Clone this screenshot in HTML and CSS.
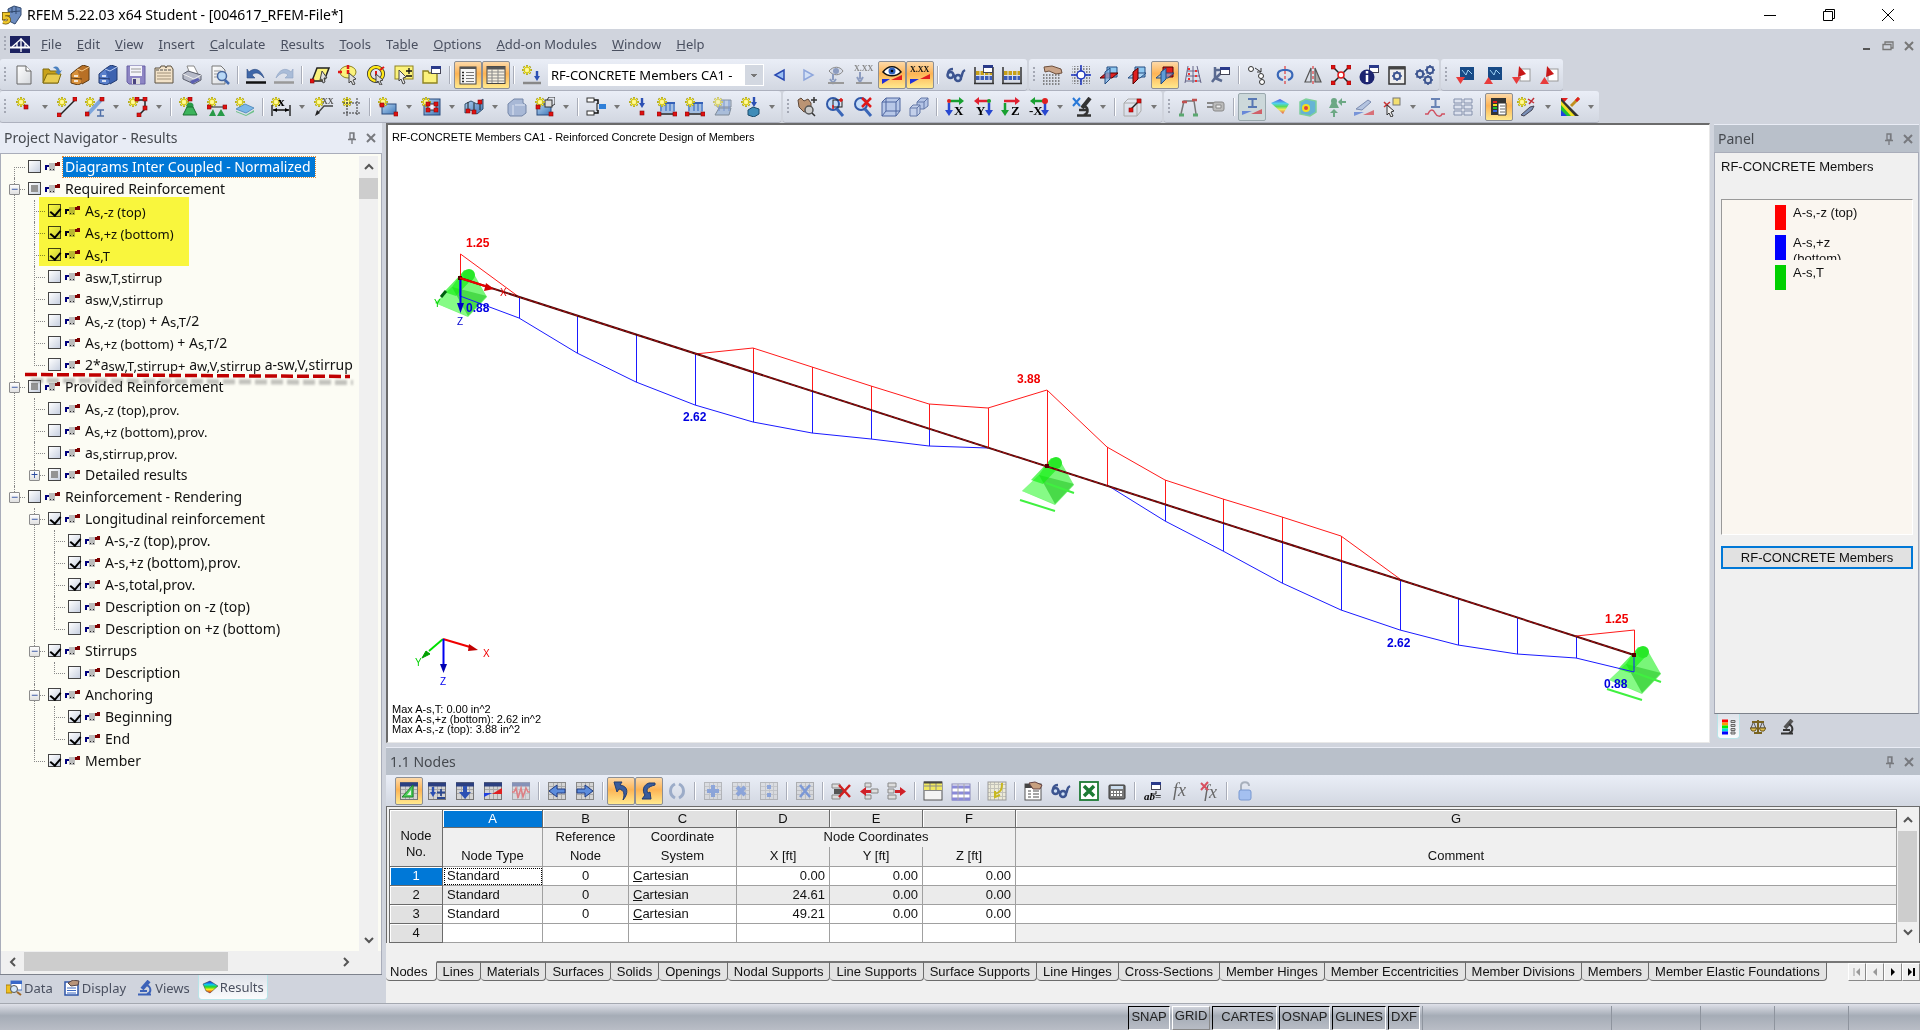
FILE: index.html
```html
<!DOCTYPE html>
<html lang="en">
<head>
    <meta charset="UTF-8">
    <meta name="viewport" content="width=device-width, initial-scale=1.0">
    <link rel="stylesheet" href="styles.css">
    <title>RFEM 5.22.03 x64 Student</title>
</head>
<body>
    <!-- Shared paints -->
    <svg class="paints" aria-hidden="true">
        <defs>
            <linearGradient id="gBlue" x1="0" y1="0" x2="1" y2="1"><stop offset="0" stop-color="#b5d4f2"/><stop offset="1" stop-color="#3f78b8"/></linearGradient>
            <linearGradient id="gRain" x1="0" y1="0" x2="0" y2="1"><stop offset="0" stop-color="#1418e0"/><stop offset=".3" stop-color="#12c8e8"/><stop offset=".5" stop-color="#22d822"/><stop offset=".7" stop-color="#f8ee18"/><stop offset="1" stop-color="#e81818"/></linearGradient>
            <linearGradient id="gPage" x1="0" y1="0" x2="1" y2="1"><stop offset="0" stop-color="#ffffff"/><stop offset="1" stop-color="#d5d8dc"/></linearGradient>
            <pattern id="pGrid" width="4" height="4" patternUnits="userSpaceOnUse"><path d="M0 3.5h4M3.5 0v4" stroke="#9a9a9a" stroke-width="1"/></pattern>
            <pattern id="pDots" width="3" height="3" patternUnits="userSpaceOnUse"><path d="M0 1h1.5" stroke="#666" stroke-width="1.5"/></pattern>
        </defs>
    </svg>

    <!-- Icon sprite -->
    <svg class="sprite" aria-hidden="true">
        <defs>
            <g id="star"><path d="M5 0v10M0 5h10M1.5 1.5l7 7M8.5 1.5l-7 7" stroke="#9b9420" stroke-width="2"/><path d="M5 .5v9M.5 5h9M2 2l6 6M8 2l-6 6" stroke="#fff12e" stroke-width="1.2"/><circle cx="5" cy="5" r="2" fill="#fff9a0"/></g>
            <g id="node"><rect width="4" height="4" fill="#e01010" stroke="#8a0808" stroke-width=".6"/></g>
            <g id="down"><path d="M3 0v6" stroke="#2c50b4" stroke-width="2.4"/><path d="M0 5h6l-3 5z" fill="#2c50b4"/></g>
            <g id="win"><rect x=".5" y=".5" width="9" height="7" fill="#fff" stroke="#445"/><path d="M0 1.5h10" stroke="#2a3a8a" stroke-width="3"/></g>
            <g id="sheet"><rect x="1.500" y="1.500" width="17" height="17" fill="#d4d4d4" stroke="#777"/><path d="M2 8.500h16M2 12.500h16M6.500 5v13M10.500 5v13M14.500 5v13" stroke="#a8a8a8"/><path d="M1 3.500h18" stroke="#2b3f80" stroke-width="4"/></g>
            <g id="sheet-plain"><rect x="1.500" y="1.500" width="17" height="17" fill="#d4d4d4" stroke="#888"/><path d="M2 5.500h16M2 9.500h16M2 13.500h16M6.500 2v16M10.500 2v16M14.500 2v16" stroke="#a8a8a8"/></g>
            <g id="mirror"><path d="M8 3L2 17h6z" fill="none" stroke="#555" stroke-width="1.200"/><path d="M12 3l6 14h-6z" fill="#aaa" stroke="#555" stroke-width="1.200"/><path d="M10 1v18" stroke="#e01818" stroke-dasharray="3 2"/></g>
            <g id="gear"><circle cx="5" cy="5" r="3.200" fill="none" stroke="#3d5590" stroke-width="2"/><path d="M5 0v2M5 8v2M0 5h2M8 5h2M1.500 1.500l1.500 1.500M7 7l1.500 1.500M8.500 1.500l-1.500 1.500M3 7l-1.500 1.500" stroke="#3d5590" stroke-width="1.600"/></g>
        </defs>
        <symbol id="new" viewBox="0 0 20 20"><path d="M3 1h9l5 5v13H3z" fill="url(#gPage)" stroke="#666"/><path d="M12 1v5h5" fill="#fff" stroke="#666"/></symbol>
        <symbol id="open" viewBox="0 0 20 20"><path d="M1 7V4h6l1 2h8v12H1z" fill="#c9a21a" stroke="#7e6a10"/><path d="M1 18l4-9h14l-3 9z" fill="#e8cc50" stroke="#7e6a10"/><path d="M11 3c3-3 6-1 7 3l2-1-3 5-4-3 2-1c-1-2-2-3-4-3z" fill="#4a80c0"/></symbol>
        <symbol id="cabinet" viewBox="0 0 20 20"><path d="M1 9l6-5 5 2v12l-4 2-7-2z" fill="#d9913a" stroke="#5e3a12"/><path d="M7 4l6-4 6 2v13l-7 4" fill="#b87026" stroke="#5e3a12"/><path d="M7 4l5 2 7-4" fill="none" stroke="#f6cc8c"/><path d="M1 13l11 1" stroke="#5e3a12"/><path d="M4 11h4M4 16h4" stroke="#fff" stroke-width="1.500"/></symbol>
        <symbol id="cabinet-blue" viewBox="0 0 20 20"><path d="M1 9l6-5 5 2v12l-4 2-7-2z" fill="#5a80cc" stroke="#20386e"/><path d="M7 4l6-4 6 2v13l-7 4" fill="#3c62b0" stroke="#20386e"/><path d="M7 4l5 2 7-4" fill="none" stroke="#bcd0f4"/><path d="M1 13l11 1" stroke="#20386e"/><path d="M4 11h4M4 16h4" stroke="#fff" stroke-width="1.500"/></symbol>
        <symbol id="save" viewBox="0 0 20 20"><path d="M1 1h18v18H3l-2-2z" fill="#8d85c4" stroke="#6860a4"/><rect x="4" y="1" width="12" height="10" fill="#f4f4fa"/><path d="M5 4h10M5 7h10" stroke="#999"/><rect x="6" y="13" width="8" height="6" fill="#ddd"/><rect x="7" y="14" width="3" height="5" fill="#4a4480"/></symbol>
        <symbol id="cards" viewBox="0 0 20 20"><path d="M1 3h5l1-2h4l1 2 1-2h4l2 3v14H1z" fill="#f2e2c8" stroke="#5b5040"/><path d="M3 8h14M3 11h14M3 14h14" stroke="#a09078"/><path d="M2 5h16" stroke="#555" stroke-dasharray="3 1"/></symbol>
        <symbol id="print" viewBox="0 0 20 20"><path d="M5 1h7l4 8H8z" fill="#fff" stroke="#888"/><path d="M1 9l5-3 13 4v5l-7 4L1 14z" fill="#b6bac8" stroke="#5a5e6c"/><path d="M1 9l11 5 7-4" fill="none" stroke="#eee"/><path d="M8 16l8-3 2 2-8 4z" fill="#5b5fb0"/></symbol>
        <symbol id="preview" viewBox="0 0 20 20"><path d="M2 1h9l4 4v14H2z" fill="url(#gPage)" stroke="#777"/><path d="M4 6h7M4 9h6M4 12h5" stroke="#999"/><circle cx="12" cy="11" r="4.500" fill="#b8d8f6" stroke="#44649c" stroke-width="1.500"/><path d="M15 15l4 4" stroke="#3f68b0" stroke-width="2.500"/></symbol>
        <symbol id="undo" viewBox="0 0 20 20"><path d="M1 4l2 3c5-5 12-3 15 6-5-6-9-6-12-3l3 3H1z" fill="#3d66a8" stroke="#2b4a80" stroke-width=".6"/><path d="M0 17.500h20" stroke="#111" stroke-width="2.500"/></symbol>
        <symbol id="redo" viewBox="0 0 20 20"><path d="M19 4l-2 3C12 2 5 4 2 13c5-6 9-6 12-3l-3 3h8z" fill="#a9bcd8" stroke="#8fa3c2" stroke-width=".6"/><path d="M0 17.500h20" stroke="#999" stroke-width="2.500"/></symbol>
        <symbol id="sel-para" viewBox="0 0 20 20"><path d="M7 3h12l-5 13H2z" fill="#fbf27c" stroke="#222" stroke-width="1.500"/><use href="#node" x="0" y="14"/><path d="M12 6l5 7-3 0 1 4-2 1-1-4-2 1z" fill="#ddd" stroke="#444"/></symbol>
        <symbol id="sel-ellipse" viewBox="0 0 20 20"><ellipse cx="10" cy="7" rx="8" ry="6" fill="#fbf27c" stroke="#8f8420"/><path d="M0 7h4M10 0v4M10 5v4" stroke="#e01818" stroke-width="2.500"/><path d="M11 8l7 6-3 1 2 4-2 1-2-4-2 2z" fill="#ddd" stroke="#444"/></symbol>
        <symbol id="sel-ring" viewBox="0 0 20 20"><circle cx="10" cy="9" r="7" fill="none" stroke="#222" stroke-width="4"/><circle cx="10" cy="9" r="7" fill="none" stroke="#ffe818" stroke-width="2.500"/><path d="M10 6v5M14 5l4-3" stroke="#e01818" stroke-width="2"/><path d="M10 9l7 6-3 1 2 4-2 0-2-4-2 2z" fill="#ddd" stroke="#444"/></symbol>
        <symbol id="sel-plus" viewBox="0 0 20 20"><rect x="1" y="1" width="18" height="13" fill="#fbf27c" stroke="#8f8420"/><path d="M15 3v6M12 6h6M12 11h6" stroke="#111" stroke-width="1.300"/><path d="M5 5l7 7-3 1 2 5-2 1-2-5-2 2z" fill="#eee" stroke="#444"/></symbol>
        <symbol id="sel-win" viewBox="0 0 20 20"><path d="M1 6h5l1 2h8v10H1z" fill="#fbf27c" stroke="#8f8420" stroke-width="1.400"/><use href="#win" x="9" y="1"/></symbol>
        <symbol id="list" viewBox="0 0 20 20"><rect x="2" y="2" width="16" height="17" fill="#f6f6f6" stroke="#444"/><path d="M2 3h16" stroke="#555" stroke-width="2"/><path d="M8 7.500h8M8 10.500h8M8 13.500h8M8 16.500h8" stroke="#777"/><path d="M4 7.500h2M4 10.500h2M4 13.500h2M4 16.500h2" stroke="#222" stroke-width="1.500"/></symbol>
        <symbol id="tableicon" viewBox="0 0 20 20"><rect x="1" y="1.500" width="18" height="17" fill="#f6f0e0" stroke="#444"/><path d="M1 3h18" stroke="#555" stroke-width="3"/><path d="M1 7h18M1 10h18M1 13h18M1 16h18M6 4v14M12 4v14" stroke="#888"/></symbol>
        <symbol id="load" viewBox="0 0 20 20"><use href="#star"/><use href="#down" x="12" y="6"/><path d="M1 18h18" stroke="#888" stroke-width="2.500"/></symbol>
        <symbol id="prev" viewBox="0 0 20 20"><path d="M14 5v10l-9-5z" fill="#9cc0f4" stroke="#2848b0" stroke-width="1.500"/></symbol>
        <symbol id="next" viewBox="0 0 20 20"><path d="M6 5v10l9-5z" fill="#d2e0f6" stroke="#8ea6dc" stroke-width="1.500"/></symbol>
        <symbol id="eye-load" viewBox="0 0 20 20"><path d="M3 6c4-5 11-5 14 0-3 5-10 5-14 0z" fill="#d8dde8" stroke="#888"/><circle cx="10" cy="6" r="3" fill="#8c9cc0"/><path d="M7 9v6M4 14l3 4 3-4" stroke="#8c9cc0" stroke-width="2" fill="none"/><path d="M2 18h16" stroke="#999" stroke-width="2"/></symbol>
        <symbol id="x-load" viewBox="0 0 20 20"><text x="0" y="6" class="glyph-x" fill="#888">X.XX</text><path d="M6 7v7M3 12l3 5 3-5" stroke="#8c9cc0" stroke-width="2" fill="none"/><path d="M2 18h16" stroke="#999" stroke-width="2"/></symbol>
        <symbol id="eye" viewBox="0 0 20 20"><path d="M1 7c5-7 13-7 18 0-5 5-13 5-18 0z" fill="#fff" stroke="#111" stroke-width="1.500"/><circle cx="10" cy="6" r="3.500" fill="#2f63c0"/><circle cx="10" cy="6" r="1.300" fill="#000"/><path d="M0 19v-5l8 0z" fill="#2030d8"/><path d="M20 10v5H9z" fill="#e02020"/></symbol>
        <symbol id="xxx" viewBox="0 0 20 20"><text x="0" y="7" class="glyph-x" fill="#111">X.XX</text><path d="M0 19v-5l9 0z" fill="#2030d8"/><path d="M20 9v5H10z" fill="#e02020"/></symbol>
        <symbol id="glasses" viewBox="0 0 20 20"><circle cx="4.500" cy="10" r="3" fill="#cfe0f4" stroke="#3d5590" stroke-width="2.500"/><circle cx="12" cy="13" r="3" fill="#cfe0f4" stroke="#3d5590" stroke-width="2.500"/><path d="M2 8c1-4 3-4 5-4M15 12c2-2 0-5 4-7M7 10l3 2" fill="none" stroke="#3d5590" stroke-width="2.500"/></symbol>
        <symbol id="abacus" viewBox="0 0 20 20"><path d="M1 2v17M19 2v17M0 18.500h20" stroke="#333" stroke-width="1.500"/><path d="M2 8h16" stroke="#c8a018" stroke-width="4" stroke-dasharray="3.500 1"/><path d="M2 13h16" stroke="#3c5cb8" stroke-width="4" stroke-dasharray="3.500 1"/></symbol>
        <symbol id="abacus-win" viewBox="0 0 20 20"><path d="M1 2v17M19 2v17M0 18.500h20" stroke="#333" stroke-width="1.500"/><path d="M2 8h16" stroke="#c8a018" stroke-width="4" stroke-dasharray="3.500 1"/><path d="M2 13h16" stroke="#3c5cb8" stroke-width="4" stroke-dasharray="3.500 1"/><use href="#win" x="9" y="0"/></symbol>
        <symbol id="hand-grid" viewBox="0 0 20 20"><rect y="8" width="18" height="12" fill="url(#pDots)"/><path d="M1 2l8-1 9 3 1 4-6 1-7-3-4 1z" fill="#caa58a" stroke="#6d4f3c"/></symbol>
        <symbol id="grid-center" viewBox="0 0 20 20"><rect x="1" y="1" width="18" height="18" fill="url(#pDots)"/><path d="M10 0v20M0 10h20" stroke="#1b35c0" stroke-width="1.500"/><circle cx="10" cy="10" r="4" fill="#fff" stroke="#1b35c0" stroke-width="1.500"/></symbol>
        <symbol id="plane-xy" viewBox="0 0 20 20"><path d="M8 2h10v10H8z" fill="#8fc8f0" stroke="#234a80"/><path d="M1 13l6-5h12l-6 5z" fill="#e02020" stroke="#500"/><path d="M6 7l5-4v11l-5 5z" fill="#7ab4e8" fill-opacity=".75" stroke="#234a80"/></symbol>
        <symbol id="plane-yz" viewBox="0 0 20 20"><path d="M8 2h10v10H8z" fill="#8fc8f0" stroke="#234a80"/><path d="M1 13l6-5h12l-6 5z" fill="#a8d4f4" stroke="#234a80"/><path d="M6 7l5-4v11l-5 5z" fill="#e02020" stroke="#500"/></symbol>
        <symbol id="plane-xz" viewBox="0 0 20 20"><path d="M8 2h10v10H8z" fill="#e02020" stroke="#500"/><path d="M1 13l6-5h12l-6 5z" fill="#8fc0ec" fill-opacity=".6" stroke="#234a80"/><path d="M6 7l5-4v11l-5 5z" fill="#5c9cd8" stroke="#234a80"/></symbol>
        <symbol id="net" viewBox="0 0 20 20"><path d="M5 1L2 18M10 1v17M14 1l4 17M4 6h12M3 11h14M2 16h16" stroke="#668" fill="none"/><path d="M6 3v13M13 5v12" stroke="#f03030" stroke-width="2" stroke-dasharray="2 3"/></symbol>
        <symbol id="wrench" viewBox="0 0 20 20"><path d="M4 2v11l-3 4M4 5h6M4 13l7 3M5 13l8-8" stroke="#5a6a90" stroke-width="2.500" fill="none"/><use href="#win" x="9" y="2"/></symbol>
        <symbol id="copy-node" viewBox="0 0 20 20"><circle cx="4" cy="4" r="2.500" fill="#fff" stroke="#333"/><circle cx="14" cy="11" r="2.500" fill="#fff" stroke="#333"/><circle cx="15" cy="17" r="2.500" fill="#fff" stroke="#333"/><path d="M8 3l6 4M14 3v4h-4" stroke="#333" fill="none"/></symbol>
        <symbol id="rotate" viewBox="0 0 20 20"><path d="M8 15C1 13 1 6 8 5h4c7 1 7 8 1 10" fill="none" stroke="#3a68b8" stroke-width="2.200"/><path d="M10 1v18" stroke="#e01818" stroke-dasharray="3 2"/></symbol>
        <symbol id="mirror-i" viewBox="0 0 20 20"><use href="#mirror"/></symbol>
        <symbol id="explode" viewBox="0 0 20 20"><path d="M2 2l16 16M18 2L2 18" stroke="#222" stroke-width="1.500"/><use href="#node"/><use href="#node" x="16"/><use href="#node" y="16"/><use href="#node" x="16" y="16"/><circle cx="10" cy="10" r="3" fill="#fff" stroke="#e01818" stroke-width="1.500"/></symbol>
        <symbol id="info" viewBox="0 0 20 20"><use href="#win" x="10" y="0"/><circle cx="8" cy="12" r="7.500" fill="#1c2470"/><path d="M8 10v7M8 6v2.500" stroke="#fff" stroke-width="2.500"/></symbol>
        <symbol id="gear-win" viewBox="0 0 20 20"><rect x="2" y="2" width="16" height="17" fill="#eee" stroke="#333" stroke-width="1.500"/><path d="M2 3h16" stroke="#444" stroke-width="3"/><use href="#gear" x="5" y="6"/></symbol>
        <symbol id="gears" viewBox="0 0 20 20"><use href="#gear" x="0" y="4"/><use href="#gear" x="10" y="0"/><use href="#gear" x="8" y="10"/></symbol>
        <symbol id="mod-down" viewBox="0 0 20 20"><rect x="5" y="2" width="14" height="13" fill="#174a86"/><path d="M7 5l4 5 2-5 4 4" stroke="#9cd0f4" fill="none"/><path d="M1 12h9l-4.500 7z" fill="#e83c3c"/></symbol>
        <symbol id="mod-up" viewBox="0 0 20 20"><rect x="5" y="2" width="14" height="13" fill="#174a86"/><path d="M7 5l4 5 2-5 4 4" stroke="#9cd0f4" fill="none"/><path d="M1 19h9l-4.500-7z" fill="#e83c3c"/></symbol>
        <symbol id="pdf-down" viewBox="0 0 20 20"><rect x="9" y="4" width="10" height="12" fill="#fff" stroke="#999"/><path d="M8 1l7 8-8 3z" fill="#c81818"/><path d="M1 12h9l-4.500 7z" fill="#e83c3c"/></symbol>
        <symbol id="pdf-up" viewBox="0 0 20 20"><rect x="9" y="4" width="10" height="12" fill="#fff" stroke="#999"/><path d="M8 1l7 8-8 3z" fill="#c81818"/><path d="M1 19h9l-4.500-7z" fill="#e83c3c"/></symbol>
        <!-- second row -->
        <symbol id="n-node" viewBox="0 0 20 20"><use href="#star" x="2"/><use href="#node" x="10" y="8"/></symbol>
        <symbol id="n-line" viewBox="0 0 20 20"><use href="#star"/><path d="M3 18L18 3" stroke="#222" stroke-width="1.500"/><use href="#node" x="16"/><use href="#node" y="16"/></symbol>
        <symbol id="n-member" viewBox="0 0 20 20"><use href="#star"/><path d="M2 18L16 3" stroke="#7ea6dc" stroke-width="4"/><use href="#node" x="15"/><use href="#node" y="15"/><path d="M12 13h7M12 19h7M15.500 13v6" stroke="#5070a8" stroke-width="1.500"/></symbol>
        <symbol id="n-poly" viewBox="0 0 20 20"><use href="#star"/><path d="M8 3h9v9l-6 6" stroke="#222" fill="none" stroke-width="1.500"/><use href="#node" x="7" y="0"/><use href="#node" x="15" y="0"/><use href="#node" x="15" y="9"/><use href="#node" x="9" y="16"/></symbol>
        <symbol id="n-support" viewBox="0 0 20 20"><use href="#star"/><use href="#node" x="9" y="0"/><circle cx="11" cy="9" r="3.500" fill="#289a48"/><path d="M8 10l-4 8h14l-4-8z" fill="#3cb45c" stroke="#1a7030"/></symbol>
        <symbol id="n-linesup" viewBox="0 0 20 20"><use href="#star"/><path d="M2 10h16" stroke="#222"/><use href="#node" y="8"/><use href="#node" x="16" y="8"/><path d="M6 12l-4 7h7zM14 12l-4 7h8z" fill="#289a48"/></symbol>
        <symbol id="n-surfsup" viewBox="0 0 20 20"><use href="#star"/><path d="M1 12l9-5 9 4-8 5z" fill="#7cb8e8" stroke="#5890c0"/><path d="M1 14l10 4 8-5v2l-8 4-10-4z" fill="#6cc088"/></symbol>
        <symbol id="dim" viewBox="0 0 20 20"><use href="#star"/><text x="7" y="9" class="glyph-l">x</text><path d="M1 8v11M19 8v11M2 13h16" stroke="#111" stroke-width="1.300"/><path d="M2 13l4-2v4zM18 13l-4-2v4z"/></symbol>
        <symbol id="dimxx" viewBox="0 0 20 20"><use href="#star"/><text x="8" y="7" class="glyph-x" fill="#555">XX</text><path d="M19 9h-9L3 17" stroke="#444" fill="none" stroke-width="1.300"/><path d="M1 19l2-6 3 3z" fill="#222"/></symbol>
        <symbol id="guide" viewBox="0 0 20 20"><use href="#star"/><path d="M5 2v18M15 1v18M1 6h18M1 16h18" stroke="#333" stroke-dasharray="2 1"/></symbol>
        <symbol id="n-surf" viewBox="0 0 20 20"><rect x="4" y="7" width="14" height="10" fill="url(#gBlue)" stroke="#2b4a7c"/><use href="#star"/><use href="#node" x="2" y="6"/><use href="#node" x="16" y="15"/></symbol>
        <symbol id="n-opening" viewBox="0 0 20 20"><rect x="3" y="2" width="16" height="16" fill="url(#gBlue)" stroke="#2b4a7c"/><rect x="7" y="7" width="8" height="6" fill="#eef" stroke="#333"/><use href="#star"/><use href="#node" x="5" y="5"/><use href="#node" x="13" y="5"/><use href="#node" x="5" y="11"/><use href="#node" x="13" y="11"/></symbol>
        <symbol id="n-solid" viewBox="0 0 20 20"><path d="M1 7l6-3 6 3 6-5v10l-6 5-6-4-6 3z" fill="url(#gBlue)" stroke="#33506c"/><path d="M4 5v9M10 6v9M16 4v9" stroke="#222"/><use href="#node" x="2" y="12"/><use href="#node" x="8" y="13"/><use href="#node" x="14" y="3"/></symbol>
        <symbol id="solid" viewBox="0 0 20 20"><path d="M1 7l6-5h9v4l3 2v8l-4 3H3l-2-3z" fill="#a8b8d6" stroke="#7486a8"/><path d="M8 8h10M6 8v10" stroke="#dfe6f4"/></symbol>
        <symbol id="n-block" viewBox="0 0 20 20"><rect x="2" y="7" width="14" height="11" fill="url(#gBlue)" stroke="#2b4a7c"/><rect x="10" y="3" width="7" height="7" fill="#ddd" stroke="#333"/><path d="M12 3l2-3h6v7l-3 2" fill="none" stroke="#333"/><use href="#star"/><use href="#node" x="1" y="8"/><use href="#node" x="14" y="15"/></symbol>
        <symbol id="connect" viewBox="0 0 20 20"><rect x="1" y="1" width="7" height="4" fill="#fff" stroke="#333"/><rect x="1" y="14" width="7" height="4" fill="#fff" stroke="#333"/><path d="M8 3h4v4M8 16h4v-3" fill="none" stroke="#111" stroke-width="1.500"/><rect x="13" y="7" width="7" height="5" fill="#2f7fd8"/><path d="M11 6v8" stroke="#111"/></symbol>
        <symbol id="n-load" viewBox="0 0 20 20"><use href="#star"/><use href="#down" x="10" y="1"/><use href="#node" x="11" y="14"/></symbol>
        <symbol id="n-loads" viewBox="0 0 20 20"><path d="M3 6h15M4 6v8M9 6v8M13 6v8M17 6v8" stroke="#3460b8" stroke-width="1.800"/><path d="M1 17h18" stroke="#222" stroke-width="1.500"/><path d="M3 7h15v9H3z" fill="#7ea8dc" fill-opacity=".6"/><use href="#star"/><use href="#node" y="15"/><use href="#node" x="16" y="15"/></symbol>
        <symbol id="n-surfload" viewBox="0 0 20 20"><g opacity=".6"><path d="M4 3h14v7H4z" fill="#a8c0e0" stroke="#456"/><path d="M2 18l4-7h12l-2 7z" fill="#8aa8d0" stroke="#456"/><path d="M6 3v11M11 3v11M16 3v11" stroke="#3460b8"/><use href="#star"/></g></symbol>
        <symbol id="n-free" viewBox="0 0 20 20"><use href="#star"/><use href="#down" x="10" y="0"/><path d="M7 13l5-3 6 2v5l-5 3-6-2z" fill="#3f8cb8" stroke="#1c4c6c"/></symbol>
        <symbol id="hand-zoom" viewBox="0 0 20 20"><path d="M1 3l3-2 3 3 4-2 3 4v7l-7 2-5-5z" fill="#bb9474" stroke="#5e4838"/><circle cx="12" cy="13" r="4" fill="#ccc" stroke="#555" stroke-width="1.500"/><path d="M14 3h6M17 0v6M15 16l3 3" stroke="#333" stroke-width="1.500"/></symbol>
        <symbol id="zoom-win" viewBox="0 0 20 20"><circle cx="8" cy="7" r="6" fill="#c4dcf8" stroke="#3058a8" stroke-width="2"/><rect x="8" y="3" width="9" height="7" fill="none" stroke="#222"/><path d="M16 1v4M18 3h-4M8 8v4" stroke="#e01818" stroke-width="1.500"/><path d="M12 12l6 7" stroke="#3a66b8" stroke-width="3"/></symbol>
        <symbol id="zoom-x" viewBox="0 0 20 20"><circle cx="8" cy="7" r="6" fill="#c4dcf8" stroke="#3058a8" stroke-width="2"/><path d="M12 12l6 7" stroke="#3a66b8" stroke-width="3"/><path d="M9 1l9 9M18 1L9 10" stroke="#e01818" stroke-width="2.500"/></symbol>
        <symbol id="cube" viewBox="0 0 20 20"><path d="M1 5l4-4h14v13l-4 5H1z" fill="#b8c8e8" stroke="#4e66a0"/><path d="M1 5h14v14M15 5l4-4M5 1v13h14M5 14l-4 5" stroke="#4e66a0" fill="none"/></symbol>
        <symbol id="cubes" viewBox="0 0 20 20"><path d="M8 5l4-4h7v8l-4 3H8z" fill="#b4c4e6" stroke="#6478a8"/><path d="M8 5h7v7M15 5l4-4" fill="none" stroke="#6478a8"/><path d="M1 11l3-3h7v8l-3 3H1z" fill="#c4d0ea" stroke="#6478a8"/><path d="M1 11h7v8M8 11l3-3" fill="none" stroke="#6478a8"/></symbol>
        <symbol id="ax-x" viewBox="0 0 20 20"><path d="M3 4h13" stroke="#18a030" stroke-width="2.500"/><path d="M14 0v8l5-4z" fill="#18a030"/><path d="M4 6v9" stroke="#2848d0" stroke-width="2.500"/><path d="M0 13h8l-4 6z" fill="#2848d0"/><circle cx="4" cy="4" r="2" fill="#e02020"/><text x="9" y="18" class="glyph-l">X</text></symbol>
        <symbol id="ax-y" viewBox="0 0 20 20"><path d="M4 4h13" stroke="#e02030" stroke-width="2.500"/><path d="M6 0v8L1 4z" fill="#e02030"/><path d="M16 6v9" stroke="#2848d0" stroke-width="2.500"/><path d="M12 13h8l-4 6z" fill="#2848d0"/><circle cx="16" cy="4" r="2" fill="#18a030"/><text x="3" y="18" class="glyph-l">Y</text></symbol>
        <symbol id="ax-z" viewBox="0 0 20 20"><path d="M3 4h13" stroke="#e02030" stroke-width="2.500"/><path d="M14 0v8l5-4z" fill="#e02030"/><path d="M4 6v9" stroke="#18a030" stroke-width="2.500"/><path d="M0 13h8l-4 6z" fill="#18a030"/><text x="10" y="18" class="glyph-l">Z</text></symbol>
        <symbol id="ax-mx" viewBox="0 0 20 20"><path d="M4 4h12" stroke="#18a030" stroke-width="2.500"/><path d="M6 0v8L1 4z" fill="#18a030"/><path d="M16 6v9" stroke="#2848d0" stroke-width="2.500"/><path d="M12 13h8l-4 6z" fill="#2848d0"/><circle cx="16" cy="4" r="3" fill="#e02020"/><text x="0" y="18" class="glyph-l">-X</text></symbol>
        <symbol id="scope-x" viewBox="0 0 20 20"><path d="M1 1l7 8M8 1L1 9" stroke="#2878d8" stroke-width="2"/><path d="M18 1l-8 10" stroke="#333" stroke-width="4"/><path d="M10 9c7 0 7 7 2 9M5 18.500h14M7 13h8" stroke="#333" stroke-width="2.500" fill="none"/></symbol>
        <symbol id="clip" viewBox="0 0 20 20"><path d="M1 6l4-4h13v12l-4 5H1z" fill="none" stroke="#aaa"/><path d="M1 6h13v13" fill="none" stroke="#aaa"/><path d="M8 12l8-8" stroke="#222" stroke-width="1.500"/><use href="#node" x="14" y="2"/><use href="#node" x="6" y="11"/></symbol>
        <symbol id="frame" viewBox="0 0 20 20"><path d="M3 17L6 4h10l2 13" fill="none" stroke="#777" stroke-width="1.500"/><path d="M4 5h5M14 3h5" stroke="#c05050" stroke-width="2.500"/><path d="M1 18h5M15 18h5" stroke="#5aa870" stroke-width="3"/></symbol>
        <symbol id="motor" viewBox="0 0 20 20"><path d="M1 6h8M1 10h6" stroke="#888" stroke-width="2"/><rect x="7" y="5" width="11" height="9" rx="2" fill="#bbb" stroke="#888"/><path d="M10 8h5v3h-5z" fill="#eee" stroke="#888"/></symbol>
        <symbol id="forces" viewBox="0 0 20 20"><path d="M6 2h9M10.500 2v8M6 10h9" stroke="#5878b4" stroke-width="2"/><path d="M0 18v-4h10z" fill="#6888d8"/><path d="M20 12v5H9z" fill="#d06068"/></symbol>
        <symbol id="surfres" viewBox="0 0 20 20"><path d="M1 6l9-4 9 5-6 10z" fill="url(#gRain)" opacity=".7"/></symbol>
        <symbol id="solidres" viewBox="0 0 20 20"><path d="M2 5l6-3 10 2v11l-6 4-10-2z" fill="#48a8d0" stroke="#6c8" stroke-width="1.500" opacity=".8"/><circle cx="8" cy="11" r="4" fill="#f0e020"/><circle cx="8" cy="11" r="2" fill="#e04040"/></symbol>
        <symbol id="react" viewBox="0 0 20 20"><g fill="#6ca884"><circle cx="8" cy="4" r="3"/><path d="M3 11l3-6h4l3 6zM8 12l4 4h-3v4H7v-4H4zM12 5l4-4v3h4v2h-4v3z"/></g></symbol>
        <symbol id="memres" viewBox="0 0 20 20"><path d="M2 12L14 3l3 2L8 13z" fill="#b4c4e0" stroke="#7c8cb0"/><path d="M0 19v-4h10z" fill="#7894d8"/><path d="M20 13v5H9z" fill="#d87078"/></symbol>
        <symbol id="select-res" viewBox="0 0 20 20"><path d="M2 5l6 6M8 5l-6 5" stroke="#c83030" stroke-width="1.500"/><rect x="11" y="1" width="7" height="7" fill="#f4e070" stroke="#777"/><path d="M5 8l7 6-3 1 2 4-2 1-2-4-2 2z" fill="#eee" stroke="#333"/></symbol>
        <symbol id="ibeam" viewBox="0 0 20 20"><path d="M6 2h9M10.500 2v8M6 10h9" stroke="#6882b4" stroke-width="2"/><path d="M0 17h3c2-5 5-5 7-1s6 4 7 1h3" fill="none" stroke="#d05060" stroke-width="1.500"/></symbol>
        <symbol id="panels" viewBox="0 0 20 20"><path d="M1 2h8v4H1zM11 2h8v4h-8zM1 8h8v4H1zM11 8h8v4h-8zM1 14h8v4H1zM11 14h8v4h-8z" fill="#dde2ee" stroke="#8490ac"/></symbol>
        <symbol id="colors" viewBox="0 0 20 20"><rect x="2" y="1" width="15" height="17" fill="#333"/><path d="M4 5h4" stroke="#e02020" stroke-width="2"/><path d="M4 8h4" stroke="#f0e020" stroke-width="2"/><path d="M4 11h4" stroke="#20c030" stroke-width="2"/><path d="M4 14h4" stroke="#3060e0" stroke-width="2"/><path d="M9 6h8v12H9z" fill="#fff" stroke="#333"/><path d="M11 9h5M11 12h5M11 15h5" stroke="#666"/></symbol>
        <symbol id="wand" viewBox="0 0 20 20"><use href="#star"/><path d="M11 2l6 4M17 1l-5 6" stroke="#c03038" stroke-width="1.500"/><path d="M4 18l9-8 4-1-2 4-8 6z" fill="#7a90b8" stroke="#445"/></symbol>
        <symbol id="stripes" viewBox="0 0 20 20"><path d="M1 1h7L1 9z" fill="#e02020"/><path d="M1 1v18h18z" fill="#333"/><path d="M1 4l14 15H9L1 10z" fill="#f0e020"/><path d="M1 8l10 11H6l-5-5z" fill="#20c030"/><path d="M1 13l6 6H1z" fill="#2040e0"/><path d="M19 1l-8 8" stroke="#c09020" stroke-width="3"/><path d="M19 1l-3 3" stroke="#e02020" stroke-width="3"/></symbol>
        <!-- table toolbar -->
        <symbol id="t-edit" viewBox="0 0 20 20"><use href="#sheet"/><path d="M14 4v12H3z" fill="#4ccc58" stroke="#1c8428"/><path d="M12 9v5H8z" fill="#e8f4e8"/></symbol>
        <symbol id="t-plus" viewBox="0 0 20 20"><use href="#sheet"/><use href="#down" x="3" y="6"/><path d="M14 8v7M10 11.500h8M10 17h8" stroke="#2c4890" stroke-width="1.800"/></symbol>
        <symbol id="t-down" viewBox="0 0 20 20"><use href="#sheet"/><path d="M10 5v7" stroke="#2c50b4" stroke-width="4"/><path d="M4 11h12l-6 7z" fill="#2c50b4"/></symbol>
        <symbol id="t-res" viewBox="0 0 20 20"><use href="#sheet"/><path d="M1 16v-4h8z" fill="#2040e0"/><path d="M19 7v6H9z" fill="#e02020"/></symbol>
        <symbol id="t-wave" viewBox="0 0 20 20"><g opacity=".5"><use href="#sheet"/><path d="M1 11h2l2-4 2 10 3-10 2 9 3-9 2 4h2" fill="none" stroke="#e02020" stroke-width="1.500"/></g></symbol>
        <symbol id="t-left" viewBox="0 0 20 20"><use href="#sheet-plain"/><path d="M18 8v4h-8v4l-8-6 8-6v4z" fill="#5c8cdc" stroke="#203c84"/></symbol>
        <symbol id="t-right" viewBox="0 0 20 20"><use href="#sheet-plain"/><path d="M2 8v4h8v4l8-6-8-6v4z" fill="#5c8cdc" stroke="#203c84"/></symbol>
        <symbol id="t-back" viewBox="0 0 20 20"><path d="M3 1h8l-2 3c8 1 9 8 3 15 2-6 1-10-4-11l-2 3z" fill="#3a5c9c" stroke="#223c70"/></symbol>
        <symbol id="t-fwd" viewBox="0 0 20 20"><path d="M16 2h-6c-6 2-7 8-4 12l-3 4h9l-1-7-2 1c-2-3-1-6 7-8z" fill="#3a5c9c" stroke="#223c70"/></symbol>
        <symbol id="t-sync" viewBox="0 0 20 20"><path d="M8 3C2 6 2 14 8 17M12 3c6 3 6 11 0 14" fill="none" stroke="#9cacc8" stroke-width="3"/></symbol>
        <symbol id="t-add" viewBox="0 0 20 20"><g opacity=".5"><use href="#sheet-plain"/><path d="M10 4v12M4 10h12" stroke="#3c68c8" stroke-width="4"/></g></symbol>
        <symbol id="t-mul" viewBox="0 0 20 20"><g opacity=".5"><use href="#sheet-plain"/><path d="M6 6l8 8M14 6l-8 8" stroke="#3c68c8" stroke-width="4"/></g></symbol>
        <symbol id="t-div" viewBox="0 0 20 20"><g opacity=".5"><use href="#sheet-plain"/><path d="M10 4v4M10 12v4" stroke="#3c68c8" stroke-width="4"/></g></symbol>
        <symbol id="t-x" viewBox="0 0 20 20"><g opacity=".6"><use href="#sheet-plain"/><path d="M5 4l10 12M15 4L5 16" stroke="#3c68c8" stroke-width="2.500"/></g></symbol>
        <symbol id="t-del" viewBox="0 0 20 20"><path d="M1 3h8v4H1zM1 14h8v4H1z" fill="#ddd" stroke="#888"/><path d="M3 8h9v5H3z" fill="#555"/><path d="M8 4l11 12M19 4L8 16" stroke="#d02020" stroke-width="2.500"/></symbol>
        <symbol id="t-rowl" viewBox="0 0 20 20"><path d="M6 2h6v4H6zM6 14h6v4H6zM12 8h7v4h-7z" fill="#ddd" stroke="#888"/><path d="M12 9v3H7v3l-6-4.500L7 6v3z" fill="#d02028"/></symbol>
        <symbol id="t-rowr" viewBox="0 0 20 20"><path d="M1 2h8v4H1zM1 14h8v4H1zM1 8h6v4H1z" fill="#ddd" stroke="#888"/><path d="M8 9v3h5v3l6-4.500L13 6v3z" fill="#d02028"/></symbol>
        <symbol id="t-yel" viewBox="0 0 20 20"><rect x="1" y="1" width="18" height="18" fill="#f4f4f4" stroke="#555"/><rect x="1" y="2" width="18" height="8" fill="#f0e860"/><path d="M1 5h18M1 9.500h18M7 2v8M13 2v8" stroke="#888"/><path d="M1 1.500h18" stroke="#444" stroke-width="2"/></symbol>
        <symbol id="t-rows" viewBox="0 0 20 20"><rect x="1" y="3" width="18" height="16" fill="#fff" stroke="#8888b8"/><path d="M1 6h18M1 12h18M1 18h18" stroke="#8a8ad8" stroke-width="3"/><path d="M7 3v16M13 3v16" stroke="#aaa"/></symbol>
        <symbol id="t-pen" viewBox="0 0 20 20"><rect x="1" y="1" width="18" height="18" fill="#ecead8" stroke="#999"/><rect x="1" y="1" width="18" height="18" fill="url(#pGrid)" opacity=".5"/><path d="M15 2c0 8-2 9-7 11M8 10v6l5-2" stroke="#c8b820" stroke-width="2" fill="none"/></symbol>
        <symbol id="t-prop" viewBox="0 0 20 20"><rect x="2" y="3" width="16" height="16" fill="#fff" stroke="#555"/><path d="M2 5h16" stroke="#444" stroke-width="4"/><path d="M5 10h3M10 10h6M5 13h3M10 13h6M5 16h3M10 16h6" stroke="#888" stroke-width="1.500"/><path d="M6 2l6-1 7 3-2 4-7 0z" fill="#c8a080" stroke="#644"/></symbol>
        <symbol id="t-xls" viewBox="0 0 20 20"><rect x="1" y="1" width="18" height="18" fill="#fff" stroke="#1d7a34" stroke-width="1.800"/><path d="M5 5l10 10M15 5L5 15" stroke="#1d7a34" stroke-width="3.500"/></symbol>
        <symbol id="t-calc" viewBox="0 0 20 20"><rect x="2" y="4" width="16" height="14" rx="1" fill="#777" stroke="#333"/><rect x="4" y="5" width="12" height="3" fill="#cde"/><path d="M4 11h12M4 14h12" stroke="#fff" stroke-width="2" stroke-dasharray="2 1"/></symbol>
        <symbol id="t-ab" viewBox="0 0 20 20"><use href="#win" x="8" y="1"/><path d="M13 10v3h-4" stroke="#222" fill="none"/><text x="1" y="19" class="glyph-i">ab=</text></symbol>
        <symbol id="t-fx" viewBox="0 0 20 20"><text x="2" y="15" class="glyph-f">fx</text></symbol>
        <symbol id="t-fxx" viewBox="0 0 20 20"><text x="5" y="17" class="glyph-f">fx</text><path d="M2 2l7 7M9 1L2 9" stroke="#d85060" stroke-width="2"/></symbol>
        <symbol id="t-lock" viewBox="0 0 20 20"><path d="M6 9V5c0-5 8-5 8 0" fill="none" stroke="#a8b0bc" stroke-width="2"/><rect x="4" y="9" width="12" height="10" rx="2" fill="#a4c0f0" stroke="#7898d0"/></symbol>
        <!-- tabs and tree -->
        <symbol id="tree-item" viewBox="0 0 15 12"><path d="M0 5h5v2H2v3H0z" fill="#00007c"/><path d="M4 3h6v8H4z" fill="#bcbcbc"/><path d="M5 9h1v1H5zM8 9h1v1H8z" fill="#222"/><path d="M10 3h2V2h3v4h-5z" fill="#7c0000"/></symbol>
        <symbol id="tab-data" viewBox="0 0 16 16"><path d="M0 5h5l1 1v7H0z" fill="#f0c020" stroke="#a88010"/><rect x="5" y="1" width="11" height="9" fill="#fff" stroke="#4878c8"/><path d="M5 2.500h11" stroke="#3868c8" stroke-width="3"/><circle cx="8" cy="9" r="3.500" fill="#d4e8fa" stroke="#555"/><path d="M11 12l4 3" stroke="#a06828" stroke-width="2"/></symbol>
        <symbol id="tab-display" viewBox="0 0 16 16"><rect x="1" y="2" width="13" height="13" fill="#fff" stroke="#2d54a8" stroke-width="1.500"/><path d="M3 8h9M3 10.500h9M3 13h9" stroke="#3c68c0"/><path d="M4 3l5-3 6 1-1 4-7 1z" fill="#b89478" stroke="#544"/></symbol>
        <symbol id="tab-views" viewBox="0 0 16 16"><path d="M12 1L5 9" stroke="#3c62b8" stroke-width="4"/><path d="M10 5c5 3 4 8 0 9M1 14.500h13M3 11h7" stroke="#3c62b8" stroke-width="2" fill="none"/></symbol>
        <symbol id="tab-results" viewBox="0 0 16 16"><path d="M1 5l7-3 8 5-8 7-4-2z" fill="url(#gRain)" stroke="#333" stroke-width=".5"/></symbol>
        <symbol id="tab-colors" viewBox="0 0 16 16"><path d="M1 2h6" stroke="#f00" stroke-width="3"/><path d="M1 5h6" stroke="#f90" stroke-width="3"/><path d="M1 8h6" stroke="#0e0" stroke-width="3"/><path d="M1 11h6" stroke="#0dd" stroke-width="3"/><path d="M1 14h6" stroke="#00f" stroke-width="3"/><path d="M10 1.500h4v2h-4zM10 5.500h4v2h-4zM10 9.500h4v2h-4zM10 13h4v2h-4z" fill="#ccc" stroke="#666"/></symbol>
        <symbol id="tab-scale" viewBox="0 0 16 16"><path d="M8 1v12M2 3h12M4 14h8" stroke="#7a6420" stroke-width="2"/><path d="M3 4L1 9h5L4 4M12 4l-2 5h5l-2-5" fill="none" stroke="#555"/><path d="M0 9h7l-2 3H2zM9 9h7l-2 3h-3z" fill="#e0c050" stroke="#6a5518"/></symbol>
        <symbol id="tab-scope" viewBox="0 0 16 16"><path d="M13 1L6 9" stroke="#555" stroke-width="4"/><path d="M10 5c5 3 4 8 0 9M2 14.500h12M4 11h7" stroke="#333" stroke-width="2" fill="none"/></symbol>
        <symbol id="pin" viewBox="0 0 10 12"><path d="M3 1h4v6H3zM6.500 1v6M1 7.500h8M5 8v4" fill="none" stroke="#77797e" stroke-width="1.300"/></symbol>
        <symbol id="close" viewBox="0 0 12 12"><path d="M2 2l8 8M10 2l-8 8" stroke="#77797e" stroke-width="2"/></symbol>
        <symbol id="chev-up" viewBox="0 0 12 12"><path d="M2 8l4-4 4 4" fill="none" stroke="#555" stroke-width="2"/></symbol>
        <symbol id="chev-down" viewBox="0 0 12 12"><path d="M2 4l4 4 4-4" fill="none" stroke="#555" stroke-width="2"/></symbol>
        <symbol id="chev-left" viewBox="0 0 12 12"><path d="M8 2L4 6l4 4" fill="none" stroke="#555" stroke-width="2"/></symbol>
        <symbol id="chev-right" viewBox="0 0 12 12"><path d="M4 2l4 4-4 4" fill="none" stroke="#555" stroke-width="2"/></symbol>
    </svg>

    <header class="titlebar">
        <svg class="app-icon" viewBox="0 0 20 20"><path d="M6 4l6-3 7 2v7l-6 9-6-3z" fill="#6c8cc0" stroke="#30486e"/><path d="M10 2v6M14 2v7M7 7l11-1" stroke="#30486e"/><path d="M8 9H2v4c4-1 5 0 5 2s-2 3-6 2" fill="none" stroke="#6b5410" stroke-width="4"/><path d="M8 9H2v4c4-1 5 0 5 2s-2 3-6 2" fill="none" stroke="#f0c82c" stroke-width="2.500"/></svg>
        <h1>RFEM 5.22.03 x64 Student - [004617_RFEM-File*]</h1>
        <button class="sys" aria-label="Minimize"><svg viewBox="0 0 12 12"><path d="M0 6.500h12" stroke="#000"/></svg></button>
        <button class="sys" aria-label="Restore"><svg viewBox="0 0 12 12"><path d="M.5 2.500h9v9h-9zM2.500 2.500v-2h9v9h-2" fill="none" stroke="#000"/></svg></button>
        <button class="sys" aria-label="Close"><svg viewBox="0 0 12 12"><path d="M0 0l12 12M12 0L0 12" stroke="#000"/></svg></button>
    </header>

    <nav class="menubar">
        <span class="grip"></span>
        <svg class="doc-icon" viewBox="0 0 20 17"><path d="M0 0h20v17H0z" fill="#1c2260"/><path d="M0 11.500h20" stroke="#fff" stroke-width="2"/><path d="M11 2v14M11 3L2 11M11 3l8 8M7 7v4M15 7v4" stroke="#fff" stroke-width="1.300" fill="none"/></svg>
        <a href="#"><u>F</u>ile</a>
        <a href="#"><u>E</u>dit</a>
        <a href="#"><u>V</u>iew</a>
        <a href="#"><u>I</u>nsert</a>
        <a href="#"><u>C</u>alculate</a>
        <a href="#"><u>R</u>esults</a>
        <a href="#"><u>T</u>ools</a>
        <a href="#">Ta<u>b</u>le</a>
        <a href="#"><u>O</u>ptions</a>
        <a href="#"><u>A</u>dd-on Modules</a>
        <a href="#"><u>W</u>indow</a>
        <a href="#"><u>H</u>elp</a>
        <div class="mdi">
            <button aria-label="Minimize document"><svg viewBox="0 0 12 12"><path d="M2 9h7" stroke="#555" stroke-width="2"/></svg></button>
            <button aria-label="Restore document"><svg viewBox="0 0 12 12"><path d="M3 4V2h8v6H9M1 4.500h8v5H1z" fill="none" stroke="#777" stroke-width="1.300"/></svg></button>
            <button aria-label="Close document"><svg viewBox="0 0 12 12"><path d="M2 2l8 8M10 2l-8 8" stroke="#777" stroke-width="2"/></svg></button>
        </div>
    </nav>

    <div class="toolbars">
        <div class="bar-row">
            <div class="bar">
                <span class="grip"></span>
                <button class="tool" aria-label="New"><svg><use href="#new"/></svg></button>
                <button class="tool" aria-label="Open"><svg><use href="#open"/></svg></button>
                <button class="tool" aria-label="Project manager"><svg><use href="#cabinet"/></svg></button>
                <button class="tool" aria-label="Block manager"><svg><use href="#cabinet-blue"/></svg></button>
                <button class="tool" aria-label="Save"><svg><use href="#save"/></svg></button>
                <button class="tool" aria-label="General data"><svg><use href="#cards"/></svg></button>
                <button class="tool" aria-label="Print"><svg><use href="#print"/></svg></button>
                <button class="tool" aria-label="Printout report"><svg><use href="#preview"/></svg></button>
                <span class="sep"></span>
                <button class="tool" aria-label="Undo"><svg><use href="#undo"/></svg></button>
                <button class="tool" aria-label="Redo"><svg><use href="#redo"/></svg></button>
                <span class="sep"></span>
                <button class="tool" aria-label="Select by rhomboid"><svg><use href="#sel-para"/></svg></button>
                <button class="tool" aria-label="Select by ellipse"><svg><use href="#sel-ellipse"/></svg></button>
                <button class="tool" aria-label="Select by ring"><svg><use href="#sel-ring"/></svg></button>
                <button class="tool" aria-label="Add to selection"><svg><use href="#sel-plus"/></svg></button>
                <button class="tool" aria-label="Special selection"><svg><use href="#sel-win"/></svg></button>
                <span class="sep"></span>
                <button class="tool active" aria-label="Navigator"><svg><use href="#list"/></svg></button>
                <button class="tool active" aria-label="Tables"><svg><use href="#tableicon"/></svg></button>
                <span class="sep"></span>
                <button class="tool" aria-label="New load case"><svg><use href="#load"/></svg></button>
                <select class="case" aria-label="Load case">
                    <option>RF-CONCRETE Members CA1 -</option>
                </select>
                <button class="tool" aria-label="Previous"><svg><use href="#prev"/></svg></button>
                <button class="tool" aria-label="Next"><svg><use href="#next"/></svg></button>
                <button class="tool" aria-label="Show loads"><svg><use href="#eye-load"/></svg></button>
                <button class="tool" aria-label="Load values"><svg><use href="#x-load"/></svg></button>
                <button class="tool active" aria-label="Show results"><svg><use href="#eye"/></svg></button>
                <button class="tool active" aria-label="Result values"><svg><use href="#xxx"/></svg></button>
                <span class="sep"></span>
                <button class="tool" aria-label="View"><svg><use href="#glasses"/></svg></button>
                <button class="tool" aria-label="Calculation parameters"><svg><use href="#abacus-win"/></svg></button>
                <button class="tool" aria-label="Calculate all"><svg><use href="#abacus"/></svg></button>
            </div>
            <div class="bar">
                <span class="grip"></span>
                <button class="tool" aria-label="Grid settings"><svg><use href="#hand-grid"/></svg></button>
                <button class="tool" aria-label="Work plane origin"><svg><use href="#grid-center"/></svg></button>
                <button class="tool" aria-label="Plane XY"><svg><use href="#plane-xy"/></svg></button>
                <button class="tool" aria-label="Plane YZ"><svg><use href="#plane-yz"/></svg></button>
                <button class="tool active" aria-label="Plane XZ"><svg><use href="#plane-xz"/></svg></button>
                <button class="tool" aria-label="FE mesh"><svg><use href="#net"/></svg></button>
                <button class="tool" aria-label="Settings"><svg><use href="#wrench"/></svg></button>
                <span class="sep"></span>
                <button class="tool" aria-label="Copy"><svg><use href="#copy-node"/></svg></button>
                <button class="tool" aria-label="Rotate"><svg><use href="#rotate"/></svg></button>
                <button class="tool" aria-label="Mirror"><svg><use href="#mirror-i"/></svg></button>
                <button class="tool" aria-label="Connect lines"><svg><use href="#explode"/></svg></button>
                <button class="tool" aria-label="Info"><svg><use href="#info"/></svg></button>
                <button class="tool" aria-label="Program options"><svg><use href="#gear-win"/></svg></button>
                <button class="tool" aria-label="Options"><svg><use href="#gears"/></svg></button>
            </div>
            <div class="bar">
                <span class="grip"></span>
                <button class="tool" aria-label="Import module"><svg><use href="#mod-down"/></svg></button>
                <button class="tool" aria-label="Export module"><svg><use href="#mod-up"/></svg></button>
                <button class="tool" aria-label="Import file"><svg><use href="#pdf-down"/></svg></button>
                <button class="tool" aria-label="Export file"><svg><use href="#pdf-up"/></svg></button>
            </div>
        </div>
        <div class="bar-row">
            <div class="bar">
                <span class="grip"></span>
                <button class="tool drop" aria-label="New node"><svg><use href="#n-node"/></svg></button>
                <button class="tool" aria-label="New line"><svg><use href="#n-line"/></svg></button>
                <button class="tool drop" aria-label="New member"><svg><use href="#n-member"/></svg></button>
                <button class="tool drop" aria-label="New polyline"><svg><use href="#n-poly"/></svg></button>
                <span class="sep"></span>
                <button class="tool" aria-label="New nodal support"><svg><use href="#n-support"/></svg></button>
                <button class="tool" aria-label="New line support"><svg><use href="#n-linesup"/></svg></button>
                <button class="tool" aria-label="New surface support"><svg><use href="#n-surfsup"/></svg></button>
                <span class="sep"></span>
                <button class="tool drop" aria-label="New dimension"><svg><use href="#dim"/></svg></button>
                <button class="tool" aria-label="New comment"><svg><use href="#dimxx"/></svg></button>
                <button class="tool" aria-label="New guideline"><svg><use href="#guide"/></svg></button>
                <span class="sep"></span>
                <button class="tool drop" aria-label="New surface"><svg><use href="#n-surf"/></svg></button>
                <button class="tool drop" aria-label="New opening"><svg><use href="#n-opening"/></svg></button>
                <button class="tool drop" aria-label="New curved surface"><svg><use href="#n-solid"/></svg></button>
                <button class="tool" aria-label="New solid"><svg><use href="#solid"/></svg></button>
                <button class="tool drop" aria-label="New block"><svg><use href="#n-block"/></svg></button>
                <span class="sep"></span>
                <button class="tool drop" aria-label="Connections"><svg><use href="#connect"/></svg></button>
                <button class="tool" aria-label="New nodal load"><svg><use href="#n-load"/></svg></button>
                <button class="tool" aria-label="New member load"><svg><use href="#n-loads"/></svg></button>
                <button class="tool" aria-label="New line load"><svg><use href="#n-loads"/></svg></button>
                <button class="tool" aria-label="New surface load"><svg><use href="#n-surfload"/></svg></button>
                <button class="tool drop" aria-label="New free load"><svg><use href="#n-free"/></svg></button>
            </div>
            <div class="bar">
                <span class="grip"></span>
                <button class="tool" aria-label="Move and zoom"><svg><use href="#hand-zoom"/></svg></button>
                <button class="tool" aria-label="Zoom window"><svg><use href="#zoom-win"/></svg></button>
                <button class="tool" aria-label="Zoom all"><svg><use href="#zoom-x"/></svg></button>
                <button class="tool" aria-label="Isometric view"><svg><use href="#cube"/></svg></button>
                <button class="tool" aria-label="Perspective"><svg><use href="#cubes"/></svg></button>
                <span class="sep"></span>
                <button class="tool" aria-label="View X"><svg><use href="#ax-x"/></svg></button>
                <button class="tool" aria-label="View Y"><svg><use href="#ax-y"/></svg></button>
                <button class="tool" aria-label="View Z"><svg><use href="#ax-z"/></svg></button>
                <button class="tool drop" aria-label="View -X"><svg><use href="#ax-mx"/></svg></button>
                <button class="tool drop" aria-label="Visibility"><svg><use href="#scope-x"/></svg></button>
                <span class="sep"></span>
                <button class="tool drop" aria-label="Clipping"><svg><use href="#clip"/></svg></button>
            </div>
            <div class="bar">
                <span class="grip"></span>
                <button class="tool" aria-label="Deformations"><svg><use href="#frame"/></svg></button>
                <button class="tool" aria-label="Animation"><svg><use href="#motor"/></svg></button>
                <span class="sep"></span>
                <button class="tool pressed" aria-label="Member forces"><svg><use href="#forces"/></svg></button>
                <button class="tool" aria-label="Surface results"><svg><use href="#surfres"/></svg></button>
                <button class="tool" aria-label="Solid results"><svg><use href="#solidres"/></svg></button>
                <button class="tool" aria-label="Support reactions"><svg><use href="#react"/></svg></button>
                <button class="tool" aria-label="Member results"><svg><use href="#memres"/></svg></button>
                <button class="tool drop" aria-label="Result selection"><svg><use href="#select-res"/></svg></button>
                <button class="tool" aria-label="Result diagrams"><svg><use href="#ibeam"/></svg></button>
                <button class="tool" aria-label="Result tables"><svg><use href="#panels"/></svg></button>
                <span class="sep"></span>
                <button class="tool active" aria-label="Control panel"><svg><use href="#colors"/></svg></button>
                <button class="tool drop" aria-label="Wizard"><svg><use href="#wand"/></svg></button>
                <button class="tool drop" aria-label="Colour scale"><svg><use href="#stripes"/></svg></button>
            </div>
        </div>
    </div>

    <main class="workspace">
        <aside class="navigator">
            <div class="dock-head light">
                <h2>Project Navigator - Results</h2>
                <button aria-label="Pin navigator"><svg class="pin"><use href="#pin"/></svg></button>
                <button aria-label="Close navigator"><svg><use href="#close"/></svg></button>
            </div>
            <div class="tree-box">
                <ul class="tree">
                    <li><label class="row"><input type="checkbox"><svg><use href="#tree-item"/></svg><span class="selected">Diagrams Inter Coupled - Normalized</span></label></li>
                    <li><button class="exp" aria-label="Collapse">−</button><label class="row"><input type="checkbox" class="mixed"><svg><use href="#tree-item"/></svg><span>Required Reinforcement</span></label>
                        <ul>
                            <li><label class="row"><input type="checkbox" checked><svg><use href="#tree-item"/></svg><span>A<sub>s,-z (top)</sub></span></label></li>
                            <li><label class="row"><input type="checkbox" checked><svg><use href="#tree-item"/></svg><span>A<sub>s,+z (bottom)</sub></span></label></li>
                            <li><label class="row"><input type="checkbox" checked><svg><use href="#tree-item"/></svg><span>A<sub>s,T</sub></span></label></li>
                            <li><label class="row"><input type="checkbox"><svg><use href="#tree-item"/></svg><span>a<sub>sw,T,stirrup</sub></span></label></li>
                            <li><label class="row"><input type="checkbox"><svg><use href="#tree-item"/></svg><span>a<sub>sw,V,stirrup</sub></span></label></li>
                            <li><label class="row"><input type="checkbox"><svg><use href="#tree-item"/></svg><span>A<sub>s,-z (top)</sub> + A<sub>s,T</sub>/2</span></label></li>
                            <li><label class="row"><input type="checkbox"><svg><use href="#tree-item"/></svg><span>A<sub>s,+z (bottom)</sub> + A<sub>s,T</sub>/2</span></label></li>
                            <li><label class="row"><input type="checkbox"><svg><use href="#tree-item"/></svg><span>2*a<sub>sw,T,stirrup+</sub> a<sub>w,V,stirrup</sub> a-sw,V,stirrup</span></label></li>
                        </ul>
                    </li>
                    <li><button class="exp" aria-label="Collapse">−</button><label class="row"><input type="checkbox" class="mixed"><svg><use href="#tree-item"/></svg><span>Provided Reinforcement</span></label>
                        <ul>
                            <li><label class="row"><input type="checkbox"><svg><use href="#tree-item"/></svg><span>A<sub>s,-z (top),prov.</sub></span></label></li>
                            <li><label class="row"><input type="checkbox"><svg><use href="#tree-item"/></svg><span>A<sub>s,+z (bottom),prov.</sub></span></label></li>
                            <li><label class="row"><input type="checkbox"><svg><use href="#tree-item"/></svg><span>a<sub>s,stirrup,prov.</sub></span></label></li>
                            <li><button class="exp" aria-label="Expand">+</button><label class="row"><input type="checkbox" class="mixed"><svg><use href="#tree-item"/></svg><span>Detailed results</span></label></li>
                        </ul>
                    </li>
                    <li><button class="exp" aria-label="Collapse">−</button><label class="row"><input type="checkbox"><svg><use href="#tree-item"/></svg><span>Reinforcement - Rendering</span></label>
                        <ul>
                            <li><button class="exp" aria-label="Collapse">−</button><label class="row"><input type="checkbox" checked><svg><use href="#tree-item"/></svg><span>Longitudinal reinforcement</span></label>
                                <ul>
                                    <li><label class="row"><input type="checkbox" checked><svg><use href="#tree-item"/></svg><span>A-s,-z (top),prov.</span></label></li>
                                    <li><label class="row"><input type="checkbox" checked><svg><use href="#tree-item"/></svg><span>A-s,+z (bottom),prov.</span></label></li>
                                    <li><label class="row"><input type="checkbox" checked><svg><use href="#tree-item"/></svg><span>A-s,total,prov.</span></label></li>
                                    <li><label class="row"><input type="checkbox"><svg><use href="#tree-item"/></svg><span>Description on -z (top)</span></label></li>
                                    <li><label class="row"><input type="checkbox"><svg><use href="#tree-item"/></svg><span>Description on +z (bottom)</span></label></li>
                                </ul>
                            </li>
                            <li><button class="exp" aria-label="Collapse">−</button><label class="row"><input type="checkbox" checked><svg><use href="#tree-item"/></svg><span>Stirrups</span></label>
                                <ul>
                                    <li><label class="row"><input type="checkbox"><svg><use href="#tree-item"/></svg><span>Description</span></label></li>
                                </ul>
                            </li>
                            <li><button class="exp" aria-label="Collapse">−</button><label class="row"><input type="checkbox" checked><svg><use href="#tree-item"/></svg><span>Anchoring</span></label>
                                <ul>
                                    <li><label class="row"><input type="checkbox" checked><svg><use href="#tree-item"/></svg><span>Beginning</span></label></li>
                                    <li><label class="row"><input type="checkbox" checked><svg><use href="#tree-item"/></svg><span>End</span></label></li>
                                </ul>
                            </li>
                            <li><label class="row"><input type="checkbox" checked><svg><use href="#tree-item"/></svg><span>Member</span></label></li>
                        </ul>
                    </li>
                </ul>
                <div class="marker"></div>
                <svg class="underline" viewBox="0 0 340 20"><path d="M6 9.500l322 2" stroke="#555" stroke-opacity=".35" stroke-width="5" stroke-dasharray="12 4" class="soft"/><path d="M0 3.500l325 2" stroke="#c00000" stroke-width="3.500" stroke-dasharray="12 4"/></svg>
                <div class="vscroll">
                    <svg><use href="#chev-up"/></svg>
                    <span class="thumb"></span>
                    <svg class="end"><use href="#chev-down"/></svg>
                </div>
            </div>
            <div class="hscroll">
                <svg><use href="#chev-left"/></svg>
                <span class="thumb"></span>
                <svg class="end"><use href="#chev-right"/></svg>
            </div>
            <div class="nav-tabs">
                <button><svg><use href="#tab-data"/></svg>Data</button>
                <button><svg><use href="#tab-display"/></svg>Display</button>
                <button><svg><use href="#tab-views"/></svg>Views</button>
                <button class="current"><svg><use href="#tab-results"/></svg>Results</button>
            </div>
        </aside>

        <div class="content">
            <div class="upper">
                <section class="canvas">
                    <svg viewBox="388 125 1321 617" preserveAspectRatio="xMinYMin meet">
                        <defs>
                            <!-- hinged support, origin at the node -->
                            <g id="support">
                                <path d="M-25 25L-8 9l12-17 10 4 13 23-19 20z" fill="#20f020" fill-opacity=".6"/>
                                <path d="M-25 25l17-16 16 29z" fill="#90ff90" fill-opacity=".6"/>
                                <path d="M-8 9l35 9L8 38z" fill="#10b810" fill-opacity=".45"/>
                                <path d="M-16 14L3-6c4-5 14 0 10 6L-4 18z" fill="#10f010" fill-opacity=".65"/>
                                <circle cx="9" cy="-3" r="6" fill="#28e828"/>
                            </g>
                            <g id="rails" stroke="#40f040" stroke-width="2"><path d="M-27 34l35 11M-1 17l28 10"/></g>
                        </defs>
                        <text x="392" y="141" class="note">RF-CONCRETE Members CA1 - Reinforced Concrete Design of Members</text>
                        <use href="#support" x="460" y="278"/>
                        <use href="#support" x="1047" y="466"/><use href="#rails" x="1047" y="466"/>
                        <use href="#support" x="1634" y="655"/><use href="#rails" x="1634" y="655"/>
                        <path class="bottom-curve" d="M460 279V296L519 318 577 353 636 382 695 405 753 422 812 433 871 439 929 446 988 448M1107 485L1165 521 1223 551 1282 583 1341 610 1400 630 1458 645 1517 654 1576 658 1634 672V655"/>
                        <path class="bottom-stem" d="M519.500 297V318M577.500 316V353M636.500 335V382M695.500 354V405M753.500 373V422M812.500 391V433M871.500 410V439M929.500 429V446M1165.500 504V521M1223.500 523V551M1282.500 542V583M1341.500 560V610M1400.500 579V630M1458.500 598V645M1517.500 617V654M1576.500 636V658"/>
                        <path class="top-curve" d="M460.500 278V254L519 297M695 354L753 348 812 367 871 386 929 404 988 408 1047 390 1107 447 1165 480 1223 499 1282 517 1341 536 1400 579M1576 636L1634.500 630V655"/>
                        <path class="top-stem" d="M753.500 348V373M812.500 367V391M871.500 386V410M929.500 404V429M988.500 408V448M1047.500 390V466M1107.500 447V485M1165.500 480V504M1223.500 499V523M1282.500 517V542M1341.500 536V560"/>
                        <path class="beam" d="M460 278L1634 655"/>
                        <path class="beam-core" d="M460 278L1634 655"/>
                        <path d="M458 276h4v4h-4zM1045 464h4v4h-4zM1632 653h4v4h-4z" fill="#500"/>
                        <path d="M460 278l28 9" stroke="#f00000" stroke-width="2"/><path d="M486 283l8 6-10 2z" fill="#d00000"/>
                        <path d="M460.500 280v25" stroke="#0000f0" stroke-width="2"/><path d="M457 303h7l-3.500 10z" fill="#0000c0"/>
                        <path d="M446 291l-5 6" stroke="#006010" stroke-width="3"/>
                        <text x="434" y="307" class="axis" fill="#00d000">Y</text>
                        <text x="500" y="296" class="axis" fill="#e00000">X</text>
                        <text x="457" y="325" class="axis" fill="#0000d0">Z</text>
                        <text x="466" y="247" class="val red">1.25</text>
                        <text x="466" y="312" class="val blue">0.88</text>
                        <text x="683" y="421" class="val blue">2.62</text>
                        <text x="1017" y="383" class="val red">3.88</text>
                        <text x="1387" y="647" class="val blue">2.62</text>
                        <text x="1605" y="623" class="val red">1.25</text>
                        <text x="1604" y="688" class="val blue">0.88</text>
                        <!-- global axes -->
                        <path d="M443 639l27 8" stroke="#f00000" stroke-width="2"/><path d="M469 644l9 6-10 1z" fill="#c00000"/>
                        <path d="M443 639l-14 12" stroke="#00e000" stroke-width="2"/><path d="M426 651l4 3-8 4z" fill="#00a000" stroke="#00a000"/>
                        <path d="M443.500 639v26" stroke="#0000f0" stroke-width="2"/><path d="M440 664h7l-3.500 9z" fill="#0000b0"/>
                        <text x="483" y="657" class="axis" fill="#f00000">X</text>
                        <text x="415" y="666" class="axis" fill="#00d000">Y</text>
                        <text x="440" y="685" class="axis" fill="#0000f0">Z</text>
                        <text x="392" y="713" class="note">Max A-s,T: 0.00 in^2</text>
                        <text x="392" y="723" class="note">Max A-s,+z (bottom): 2.62 in^2</text>
                        <text x="392" y="733" class="note">Max A-s,-z (top): 3.88 in^2</text>
                    </svg>
                </section>

                <aside class="panel">
                    <div class="dock-head">
                        <h2>Panel</h2>
                        <button aria-label="Pin panel"><svg class="pin"><use href="#pin"/></svg></button>
                        <button aria-label="Close panel"><svg><use href="#close"/></svg></button>
                    </div>
                    <div class="panel-body">
                        <p>RF-CONCRETE Members</p>
                        <ul class="legend">
                            <li><i class="swatch top"></i><span>A-s,-z (top)</span></li>
                            <li><i class="swatch bottom"></i><span>A-s,+z (bottom)</span></li>
                            <li><i class="swatch torsion"></i><span>A-s,T</span></li>
                        </ul>
                        <button class="module">RF-CONCRETE Members</button>
                    </div>
                    <div class="panel-tabs">
                        <button class="current" aria-label="Colour scale"><svg><use href="#tab-colors"/></svg></button>
                        <button aria-label="Factors"><svg><use href="#tab-scale"/></svg></button>
                        <button aria-label="Filter"><svg><use href="#tab-scope"/></svg></button>
                    </div>
                </aside>
            </div>

            <section class="tables">
                <div class="dock-head">
                    <h2>1.1 Nodes</h2>
                    <button aria-label="Pin table"><svg class="pin"><use href="#pin"/></svg></button>
                    <button aria-label="Close table"><svg><use href="#close"/></svg></button>
                </div>
                <div class="bar table-bar">
                    <button class="tool active" aria-label="Edit table"><svg><use href="#t-edit"/></svg></button>
                    <button class="tool" aria-label="Load tables"><svg><use href="#t-plus"/></svg></button>
                    <button class="tool" aria-label="Load case tables"><svg><use href="#t-down"/></svg></button>
                    <button class="tool" aria-label="Result tables"><svg><use href="#t-res"/></svg></button>
                    <button class="tool" aria-label="Dynamic tables"><svg><use href="#t-wave"/></svg></button>
                    <span class="sep"></span>
                    <button class="tool" aria-label="Previous table"><svg><use href="#t-left"/></svg></button>
                    <button class="tool" aria-label="Next table"><svg><use href="#t-right"/></svg></button>
                    <span class="sep"></span>
                    <button class="tool active" aria-label="Select in graphic"><svg><use href="#t-back"/></svg></button>
                    <button class="tool active" aria-label="Select in table"><svg><use href="#t-fwd"/></svg></button>
                    <button class="tool" aria-label="Synchronize"><svg><use href="#t-sync"/></svg></button>
                    <span class="sep"></span>
                    <button class="tool" aria-label="Add"><svg><use href="#t-add"/></svg></button>
                    <button class="tool" aria-label="Multiply"><svg><use href="#t-mul"/></svg></button>
                    <button class="tool" aria-label="Divide"><svg><use href="#t-div"/></svg></button>
                    <span class="sep"></span>
                    <button class="tool" aria-label="Clear block"><svg><use href="#t-x"/></svg></button>
                    <span class="sep"></span>
                    <button class="tool" aria-label="Delete row"><svg><use href="#t-del"/></svg></button>
                    <button class="tool" aria-label="Insert row"><svg><use href="#t-rowl"/></svg></button>
                    <button class="tool" aria-label="Remove row"><svg><use href="#t-rowr"/></svg></button>
                    <span class="sep"></span>
                    <button class="tool" aria-label="Colours"><svg><use href="#t-yel"/></svg></button>
                    <button class="tool" aria-label="Filled rows"><svg><use href="#t-rows"/></svg></button>
                    <span class="sep"></span>
                    <button class="tool" aria-label="Pick object"><svg><use href="#t-pen"/></svg></button>
                    <span class="sep"></span>
                    <button class="tool" aria-label="Properties"><svg><use href="#t-prop"/></svg></button>
                    <button class="tool" aria-label="View settings"><svg><use href="#glasses"/></svg></button>
                    <button class="tool" aria-label="Excel"><svg><use href="#t-xls"/></svg></button>
                    <button class="tool" aria-label="Calculator"><svg><use href="#t-calc"/></svg></button>
                    <span class="sep"></span>
                    <button class="tool" aria-label="Parameters"><svg><use href="#t-ab"/></svg></button>
                    <button class="tool" aria-label="Formula"><svg><use href="#t-fx"/></svg></button>
                    <button class="tool" aria-label="Remove formula"><svg><use href="#t-fxx"/></svg></button>
                    <span class="sep"></span>
                    <button class="tool" aria-label="Lock"><svg><use href="#t-lock"/></svg></button>
                </div>
                <div class="grid-box">
                    <table>
                        <colgroup><col class="c-no"><col class="c-type"><col class="c-ref"><col class="c-sys"><col class="c-num"><col class="c-num"><col class="c-num"><col></colgroup>
                        <thead>
                            <tr class="letters"><th rowspan="3" class="corner">Node<br>No.</th><th class="picked">A</th><th>B</th><th>C</th><th>D</th><th>E</th><th>F</th><th>G</th></tr>
                            <tr class="names"><td></td><td>Reference</td><td>Coordinate</td><td colspan="3">Node Coordinates</td><td></td></tr>
                            <tr class="names low"><td>Node Type</td><td>Node</td><td>System</td><td>X [ft]</td><td>Y [ft]</td><td>Z [ft]</td><td>Comment</td></tr>
                        </thead>
                        <tbody>
                            <tr><th class="picked">1</th><td class="focus">Standard</td><td class="mid">0</td><td><u>C</u>artesian</td><td class="num">0.00</td><td class="num">0.00</td><td class="num">0.00</td><td></td></tr>
                            <tr class="alt"><th>2</th><td>Standard</td><td class="mid">0</td><td><u>C</u>artesian</td><td class="num">24.61</td><td class="num">0.00</td><td class="num">0.00</td><td></td></tr>
                            <tr><th>3</th><td>Standard</td><td class="mid">0</td><td><u>C</u>artesian</td><td class="num">49.21</td><td class="num">0.00</td><td class="num">0.00</td><td></td></tr>
                            <tr><th>4</th><td></td><td></td><td></td><td></td><td></td><td></td><td class="off"></td></tr>
                        </tbody>
                    </table>
                    <div class="vscroll">
                        <svg><use href="#chev-up"/></svg>
                        <span class="thumb"></span>
                        <svg class="end"><use href="#chev-down"/></svg>
                    </div>
                </div>
                <div class="sheet-tabs">
                    <button class="current">Nodes</button>
                    <button>Lines</button>
                    <button>Materials</button>
                    <button>Surfaces</button>
                    <button>Solids</button>
                    <button>Openings</button>
                    <button>Nodal Supports</button>
                    <button>Line Supports</button>
                    <button>Surface Supports</button>
                    <button>Line Hinges</button>
                    <button>Cross-Sections</button>
                    <button>Member Hinges</button>
                    <button>Member Eccentricities</button>
                    <button>Member Divisions</button>
                    <button>Members</button>
                    <button>Member Elastic Foundations</button>
                    <div class="sheet-nav">
                        <button aria-label="First"><svg viewBox="0 0 10 10"><path d="M2 1v8" stroke="#999"/><path d="M8 1v8L4 5z" fill="#999"/></svg></button>
                        <button aria-label="Back"><svg viewBox="0 0 10 10"><path d="M7 1v8L3 5z" fill="#999"/></svg></button>
                        <button aria-label="Forward"><svg viewBox="0 0 10 10"><path d="M3 1v8l4-4z"/></svg></button>
                        <button aria-label="Last"><svg viewBox="0 0 10 10"><path d="M2 1v8l4-4z"/><path d="M8 1v8" stroke="#000" stroke-width="2"/></svg></button>
                    </div>
                </div>
            </section>
        </div>
    </main>

    <footer class="statusbar">
        <button>SNAP</button>
        <button class="up">GRID</button>
        <button class="wide">CARTES</button>
        <button>OSNAP</button>
        <button>GLINES</button>
        <button>DXF</button>
        <span class="cell first"></span>
        <span class="cell second"></span>
        <span class="cell"></span>
        <span class="cell"></span>
        <span class="cell"></span>
    </footer>
</body>
</html>
```

FILE: styles.css
```css
* {
    box-sizing: border-box;
}

body {
    margin: 0;
    height: 100vh;
    display: flex;
    flex-direction: column;
    overflow: hidden;
    background-color: #d0d4dd;
    font-family: "Noto Sans", "Open Sans", sans-serif;
    font-size: 14px;
    color: #111;
}

button {
    font: inherit;
    color: inherit;
    margin: 0;
    padding: 0;
    border: 0;
    background: none;
}

h1, h2, p, ul {
    margin: 0;
    padding: 0;
    font-weight: normal;
}

ul {
    list-style: none;
}

.paints {
    position: absolute;
    width: 0;
    height: 0;
}

.sprite {
    display: none;
}

.glyph-x {
    font: bold 8px "Liberation Serif", serif;
}

.glyph-l {
    font: bold 13px "Liberation Serif", serif;
}

.glyph-i {
    font: italic bold 11px "Liberation Serif", serif;
}

.glyph-f {
    font: italic 18px "Liberation Serif", serif;
    fill: #666;
}

/* title bar */
.titlebar {
    display: flex;
    align-items: center;
    height: 29px;
    padding: 0 3px 0 2px;
    background-color: #fff;
}

.app-icon {
    width: 20px;
    height: 20px;
    margin-right: 5px;
}

.titlebar h1 {
    flex: 1;
    font-size: 14px;
    color: #000;
}

.sys {
    display: flex;
    justify-content: center;
    width: 59px;
}

.sys svg {
    width: 12px;
    height: 12px;
}

/* menu */
.menubar {
    display: flex;
    align-items: center;
    height: 30px;
    padding: 0 5px 0 4px;
    color: #4a5060;
}

.menubar a {
    color: inherit;
    text-decoration: none;
    margin-right: 15px;
    font-size: 13px;
}

.doc-icon {
    width: 20px;
    height: 17px;
    margin-right: 11px;
}

.mdi {
    display: flex;
    gap: 9px;
    margin-left: auto;
    padding-top: 4px;
}

.mdi svg {
    display: block;
    width: 12px;
    height: 12px;
}

.grip {
    width: 2px;
    height: 16px;
    margin-right: 4px;
    background: repeating-linear-gradient(#a4a8b4 0 2px, transparent 2px 4px);
}

/* toolbars */
.bar-row {
    display: flex;
    gap: 2px;
    height: 32px;
}

.bar {
    display: flex;
    align-items: center;
    height: 31px;
    padding: 0 1px 0 4px;
    border-radius: 3px;
    background: linear-gradient(#eaeef7, #d2d7e1);
    box-shadow: 0 1px 0 #adb1be;
}

.bar .grip {
    margin-right: 4px;
}

.bar-row .bar:not(:first-child) {
    padding-left: 4px;
    padding-right: 0;
}

.tool {
    display: flex;
    flex: none;
    align-items: center;
    justify-content: center;
    width: 28px;
    height: 28px;
}

.tool svg {
    width: 20px;
    height: 20px;
}

.tool.active {
    border: 1px solid #8d8f94;
    border-radius: 2px;
    background: linear-gradient(#fdd9a8, #fdb455 45%, #ffe98e);
}

.tool.pressed {
    border: 1px solid #9aa8ae;
    border-radius: 2px;
    background-color: #ccd8da;
}

.tool.drop {
    width: 43px;
    justify-content: flex-start;
    padding-left: 4px;
}

.tool.drop::after {
    content: "";
    margin-left: 8px;
    border: 3px solid transparent;
    border-top: 4px solid #777;
    border-bottom: 0;
}

.sep {
    flex: none;
    width: 8px;
    height: 18px;
    background: linear-gradient(90deg, transparent 3px, #a9adb9 3px 4px, #fff 4px 5px, transparent 5px);
}

.case {
    appearance: none;
    width: 216px;
    height: 22px;
    margin: 0 2px;
    padding: 0 20px 0 2px;
    border: 1px solid #fff;
    border-radius: 0;
    font: 13px "Noto Sans", "Open Sans", sans-serif;
    color: #000;
    background:
        linear-gradient(#777, #777) right 6px top 9px / 6px 1px no-repeat,
        linear-gradient(#777, #777) right 7px top 10px / 4px 1px no-repeat,
        linear-gradient(#777, #777) right 8px top 11px / 2px 1px no-repeat,
        linear-gradient(90deg, #fff calc(100% - 18px), #d3d8e1 calc(100% - 18px));
}

/* main area */
.workspace {
    display: flex;
    flex: 1;
    min-height: 0;
    gap: 4px;
}

.dock-head {
    display: flex;
    flex: none;
    align-items: center;
    height: 28px;
    padding: 0 5px 0 4px;
    border-top: 1px solid #e9ecf5;
    background-color: #b9c0ca;
    color: #45494f;
}

.dock-head.light {
    height: 30px;
    padding-bottom: 2px;
    background-color: #e8ecf5;
}

.dock-head h2 {
    flex: 1;
    font-size: 14px;
}

.dock-head button {
    margin-left: 7px;
}

.dock-head svg {
    display: block;
    width: 12px;
    height: 12px;
}

.navigator {
    display: flex;
    flex-direction: column;
    width: 382px;
}

.tree-box {
    position: relative;
    display: flex;
    flex: 1;
    min-height: 0;
    padding: 2px 3px 0 2px;
    border: solid #a9adba;
    border-width: 1px 1px 0;
    background-color: #fcfcf4;
}

.tree {
    flex: 1;
    padding-left: 11px;
    min-width: 0;
    font-size: 14px;
}

.tree ul {
    margin-left: 20px;
}

.tree li {
    position: relative;
}

.tree li::before {
    content: "";
    position: absolute;
    left: 0;
    top: 0;
    bottom: 0;
    border-left: 1px dotted #888;
}

.tree > li:first-child::before {
    top: 11px;
}

.tree li:last-child::before {
    bottom: auto;
    height: 12px;
}

.row {
    display: flex;
    align-items: center;
    height: 22px;
    white-space: nowrap;
}

.row::before {
    content: "";
    width: 11px;
    margin-right: 3px;
    border-top: 1px dotted #888;
}

.row input {
    appearance: none;
    position: relative;
    flex: none;
    width: 13px;
    height: 13px;
    margin: 0 4px 2px 0;
    border: 1px solid #444;
    background: linear-gradient(135deg, #fff, #c8d0e0);
}

.row input:checked::before {
    content: "";
    position: absolute;
    left: 3px;
    top: 1px;
    width: 5px;
    height: 8px;
    border: solid #000;
    border-width: 0 2px 2px 0;
    transform: rotate(40deg);
}

.row input.mixed::before {
    content: "";
    position: absolute;
    left: 2px;
    top: 2px;
    width: 7px;
    height: 7px;
    background-color: #949494;
}

.row svg {
    width: 15px;
    height: 12px;
    margin: 0 3px 2px 0;
}

.row span {
    padding: 0 2px;
    line-height: 20px;
}

.row sub {
    font-size: 13px;
    line-height: 1;
    vertical-align: -1px;
}

.row .selected {
    padding-right: 4px;
    outline: 1px dotted #e08a3a;
    background-color: #0078d7;
    color: #fff;
}

.exp {
    position: absolute;
    z-index: 1;
    left: -5px;
    top: 6px;
    width: 11px;
    height: 11px;
    border: 1px solid #8c8c8c;
    border-radius: 1px;
    background: linear-gradient(#fff, #e0e0e0);
    color: #2b4ba0;
    font: 12px/9px "Liberation Sans", sans-serif;
}

/* yellow highlighter over the three checked results */
.marker {
    position: absolute;
    left: 38px;
    top: 43px;
    width: 150px;
    height: 69px;
    background-color: #fcf93f;
    mix-blend-mode: multiply;
}

.underline {
    position: absolute;
    left: 24px;
    top: 217px;
    width: 340px;
    height: 20px;
}

.soft {
    filter: blur(1px);
}

.vscroll {
    display: flex;
    flex-direction: column;
    align-items: center;
    width: 19px;
    background-color: #f0f0f0;
}

.vscroll svg,
.hscroll svg {
    flex: none;
    width: 12px;
    height: 12px;
    margin: 5px;
}

.vscroll .thumb {
    width: 19px;
    height: 21px;
    background-color: #cdcdcd;
}

.vscroll .end {
    margin-top: auto;
}

.hscroll {
    display: flex;
    align-items: center;
    height: 23px;
    padding: 0 24px 2px 1px;
    border: solid #a9adba;
    border-width: 0 1px;
    background-color: #f0f0f0;
    box-shadow: 0 1px 0 #7d828c;
}

.hscroll .thumb {
    width: 204px;
    height: 19px;
    background-color: #cdcdcd;
}

.hscroll .end {
    margin-left: auto;
}

.nav-tabs {
    display: flex;
    align-items: flex-start;
    height: 29px;
    padding: 1px 0 0 3px;
    gap: 5px;
    color: #4a5060;
}

.nav-tabs button {
    display: flex;
    align-items: center;
    gap: 2px;
    height: 25px;
    padding: 0 3px;
    font-size: 13px;
}

.nav-tabs svg,
.panel-tabs svg {
    width: 16px;
    height: 16px;
}

.current {
    border: 1px solid #b8e4e8;
    border-top: 0;
    border-radius: 0 0 4px 4px;
    background: linear-gradient(#dfe3ea, #fafbfc);
}

.content {
    display: flex;
    flex: 1;
    flex-direction: column;
    min-width: 0;
}

.upper {
    display: flex;
    flex: 1;
    min-height: 0;
    gap: 4px;
    padding-right: 1px;
    margin-bottom: 4px;
}

.canvas {
    flex: 1;
    min-width: 0;
    border-top: 2px solid #6b6b6b;
    border-left: 2px solid #6b6b6b;
    border-right: 1px solid #e8e8e8;
    border-bottom: 1px solid #e8e8e8;
    background-color: #fff;
}

.canvas svg {
    display: block;
    width: 100%;
    height: 100%;
    fill: none;
}

.note {
    font: 11px "Liberation Sans", sans-serif;
    fill: #000;
}

.axis {
    font: 10px "Liberation Sans", sans-serif;
}

.val {
    font: bold 12px "Liberation Sans", sans-serif;
}

.red {
    fill: #f00000;
}

.blue {
    fill: #0000e0;
}

.bottom-curve,
.bottom-stem {
    stroke: #1a1aff;
}

.top-curve,
.top-stem {
    stroke: #ff1a1a;
}

.beam {
    stroke: #4a0808;
    stroke-width: 2;
}

.beam-core {
    stroke: #b01010;
    stroke-width: 1;
    stroke-dasharray: 4 2;
}

/* right panel */
.panel {
    display: flex;
    flex-direction: column;
    width: 205px;
    padding-top: 1px;
    font-family: "Liberation Sans", sans-serif;
    font-size: 13px;
}

.panel .dock-head {
    font-family: "Noto Sans", "Open Sans", sans-serif;
}

.panel-body {
    flex: 1;
    padding: 6px 5px 0 6px;
    border: 1px solid #a9adba;
    border-bottom-color: #7d828c;
    background-color: #f0f0f0;
}

.panel-body p {
    line-height: 16px;
    margin-bottom: 24px;
}

.legend {
    height: 336px;
    padding: 5px 0 0 53px;
    border: 1px solid #999;
    border-right-color: #fff;
    border-bottom-color: #fff;
    background-color: #faf6f0;
}

.legend li {
    display: flex;
    gap: 7px;
    height: 25px;
    margin-bottom: 5px;
    overflow: hidden;
    line-height: 16px;
}

.legend span {
    width: 70px;
}

.swatch {
    width: 11px;
    height: 25px;
}

.top {
    background-color: #f00;
}

.bottom {
    background-color: #00f;
}

.torsion {
    background-color: #00d000;
}

.module {
    width: 100%;
    height: 23px;
    margin-top: 11px;
    border: 2px solid #0078d7;
    background-color: #e1e1e1;
}

.panel-tabs {
    display: flex;
    gap: 6px;
    height: 29px;
    padding: 0 3px;
}

.panel-tabs button {
    width: 23px;
    height: 25px;
    padding-top: 4px;
}

/* bottom tables */
.tables {
    display: flex;
    flex-direction: column;
    height: 256px;
    font-family: "Liberation Sans", sans-serif;
    font-size: 13px;
    background-color: #f0f0f0;
}

.tables .dock-head {
    font-family: "Noto Sans", "Open Sans", sans-serif;
    font-size: 14px;
}

.table-bar {
    flex: none;
    padding-left: 9px;
    border-radius: 0;
}

.grid-box {
    display: flex;
    padding: 2px 2px 0 2px;
    border: 1px solid #6b6b6b;
    border-bottom: 0;
    background-color: #f0f0f0;
}

table {
    flex: 1;
    width: 100%;
    table-layout: fixed;
    border-collapse: collapse;
}

.c-no {
    width: 53px;
}

.c-type {
    width: 100px;
}

.c-ref {
    width: 86px;
}

.c-sys {
    width: 108px;
}

.c-num {
    width: 93px;
}

th, td {
    padding: 0 4px;
    height: 19px;
    border: 1px solid #a0a0a0;
    font-weight: normal;
    text-align: left;
    line-height: 16px;
}

th {
    text-align: center;
    background-color: #e1e1e1;
    border-color: #6b6b6b;
    box-shadow: inset 1px 1px 0 #fff;
}

.letters th {
    height: 18px;
}

.letters .corner {
    padding-bottom: 6px;
    vertical-align: bottom;
}

.names td {
    text-align: center;
    border-bottom: 0;
}

.names.low td {
    height: 20px;
    border-top: 0;
}

tbody td {
    background-color: #fff;
}

tbody .alt td {
    background-color: #ebebeb;
}

tbody .off {
    background-color: #f0f0f0;
}

th.picked {
    background-color: #0078d7;
    color: #fff;
}

.focus {
    outline: 1px dotted #000;
    outline-offset: -2px;
}

.mid {
    text-align: center;
}

.num {
    text-align: right;
}

.grid-box .vscroll {
    margin-left: 1px;
}

.grid-box .thumb {
    height: 91px;
}

.sheet-tabs {
    display: flex;
    align-items: flex-start;
    height: 42px;
    margin-top: 18px;
}

.sheet-tabs > button {
    height: 20px;
    padding: 0 6px;
    border: 1px solid #6b6b6b;
    border-left: 0;
    border-top: 2px solid #777;
    border-radius: 0 0 4px 4px;
    background-color: #e3e3e3;
    white-space: nowrap;
}

.sheet-tabs > .current {
    padding: 0 8px 0 4px;
    border-top-color: #f0f0f0;
    background: #f0f0f0;
}

.sheet-nav {
    display: flex;
    flex: 1;
    justify-content: flex-end;
    border-top: 2px solid #777;
}

.sheet-nav button {
    width: 18px;
    height: 18px;
    border: 1px solid;
    border-color: #fff #888 #888 #fff;
    background-color: #f0f0f0;
}

.sheet-nav svg {
    display: block;
    width: 10px;
    height: 10px;
    margin: auto;
}

/* status bar */
.statusbar {
    display: flex;
    justify-content: flex-end;
    gap: 2px;
    height: 27px;
    padding-top: 2px;
    border-top: 1px solid #a4a8b0;
    background: linear-gradient(#dfe1e9, #a5acb6 45%, #b9bdc6);
    font-family: "Liberation Sans", sans-serif;
    font-size: 13px;
    color: #222;
}

.statusbar button {
    padding: 0 2px 4px;
    border: 1px solid;
    border-color: #000 #fff #fff #000;
}

.statusbar .up {
    padding-bottom: 6px;
    border-color: #fff #888 #888 #fff;
}

.statusbar .wide {
    padding-left: 8px;
}

.cell {
    width: 72px;
    border-left: 1px solid #8e949e;
}

.cell.first {
    width: 187px;
}

.cell.second {
    width: 87px;
}
```
